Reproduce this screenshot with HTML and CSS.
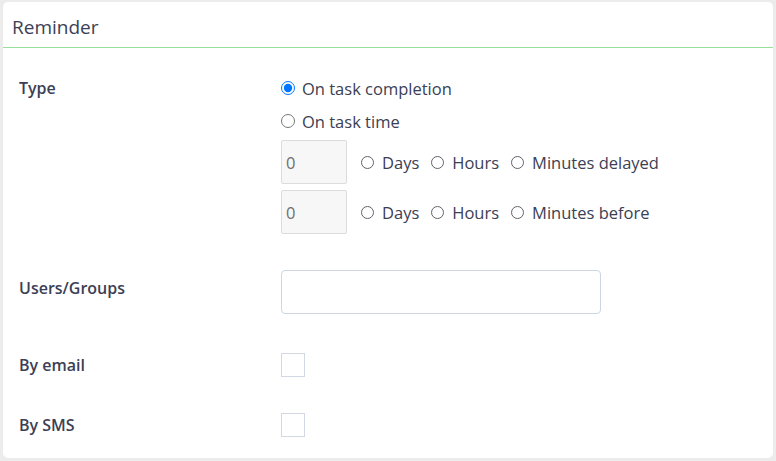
FILE: index.html
```html
<!DOCTYPE html>
<html lang="en">
<head>
    <meta charset="UTF-8">
    <meta name="viewport" content="width=device-width, initial-scale=1.0">
    <title>Reminder</title>
    <link rel="stylesheet" href="styles.css">
</head>
<body>
    <div class="card">
        <div class="card-header">Reminder</div>

        <div class="card-body">
            <!-- Type -->
            <div class="row row-type">
                <label class="row-label">Type</label>
                <div class="row-field">
                    <label class="option">
                        <input type="radio" name="type" checked>
                        <span>On task completion</span>
                    </label>
                    <label class="option">
                        <input type="radio" name="type">
                        <span>On task time</span>
                    </label>
                    <div class="delay">
                        <input type="text" class="num" value="0">
                        <label class="unit"><input type="radio" name="after"> Days</label>
                        <label class="unit"><input type="radio" name="after"> Hours</label>
                        <label class="unit"><input type="radio" name="after"> Minutes delayed</label>
                    </div>
                    <div class="delay">
                        <input type="text" class="num" value="0">
                        <label class="unit"><input type="radio" name="before"> Days</label>
                        <label class="unit"><input type="radio" name="before"> Hours</label>
                        <label class="unit"><input type="radio" name="before"> Minutes before</label>
                    </div>
                </div>
            </div>

            <!-- Users/Groups -->
            <div class="row row-users">
                <label class="row-label">Users/Groups</label>
                <div class="row-field">
                    <input type="text" class="users">
                </div>
            </div>

            <!-- By email -->
            <div class="row row-check">
                <label class="row-label">By email</label>
                <div class="row-field">
                    <input type="checkbox" class="check">
                </div>
            </div>

            <!-- By SMS -->
            <div class="row row-check last">
                <label class="row-label">By SMS</label>
                <div class="row-field">
                    <input type="checkbox" class="check">
                </div>
            </div>
        </div>
    </div>
</body>
</html>
```
FILE: styles.css
```css
body {
    margin: 0;
    padding: 2px 3px 3px 3px;
    background-color: #ececed;
    font-family: "Open Sans", sans-serif;
    font-size: 16.5px;
    color: #3b4054;
}
.card {
    background: #fff;
    border-radius: 5px;
    height: 456px;
    box-sizing: border-box;
}
.card-header {
    height: 46px;
    box-sizing: border-box;
    padding: 14px 9px 0;
    font-size: 19px;
    line-height: 22px;
    border-bottom: 1px solid #98e09c;
}
.card-body {
    padding: 29px 16px 0;
}
.row {
    display: flex;
    margin-bottom: 36px;
}
.row-label {
    width: 262px;
    flex-shrink: 0;
    font-weight: 600;
    font-size: 16px;
    line-height: 22px;
}
.row-field {
    display: flex;
    flex-direction: column;
}
.option {
    display: flex;
    align-items: center;
    height: 22px;
    margin-bottom: 11px;
}
.option input {
    width: 14px;
    height: 14px;
    margin: 0 7px 0 0;
}
.delay {
    display: flex;
    align-items: center;
    margin-top: -3px;
    margin-bottom: 6px;
}
.delay:last-child {
    margin-bottom: 0;
}
.delay + .delay {
    margin-top: 0;
}
.num {
    width: 66px;
    height: 44px;
    box-sizing: border-box;
    padding: 0 4px;
    margin: 0 14px 0 0;
    background: #f7f7f7;
    border: 1px solid #dcdcdc;
    border-radius: 2px;
    font-family: inherit;
    font-size: 16.5px;
    color: #6f6f6f;
}
.unit {
    display: flex;
    align-items: center;
    margin-right: 12px;
}
.unit input {
    appearance: none;
    width: 13px;
    height: 13px;
    box-sizing: border-box;
    margin: 0 8px 0 0;
    border: 1px solid #5f6368;
    border-radius: 50%;
    background: #fff;
}
.row-users {
    margin-bottom: 39px;
}
.row-users .row-label {
    padding-top: 7px;
}
.users {
    width: 320px;
    height: 44px;
    box-sizing: border-box;
    margin: 0;
    border: 1px solid #cdd6e6;
    border-radius: 4px;
}
.row-check {
    align-items: center;
}
.row-check.last {
    margin-bottom: 0;
}
.check {
    appearance: none;
    width: 24px;
    height: 24px;
    margin: 0;
    border: 1px solid #d3d8e2;
    background: #fff;
}
```
